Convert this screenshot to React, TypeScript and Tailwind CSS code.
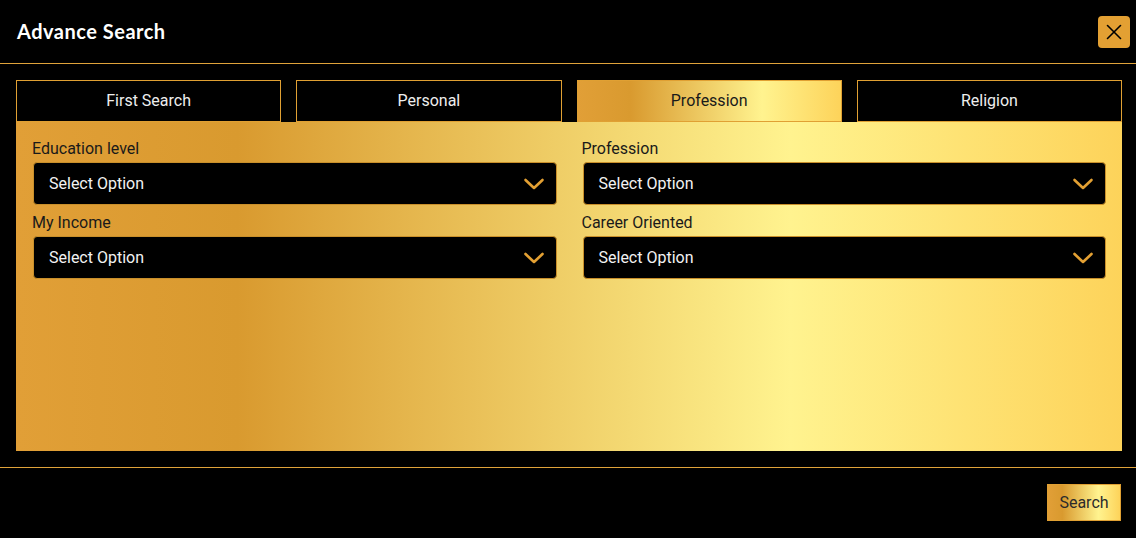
import { X } from "lucide-react";

const gold = "bg-[linear-gradient(90deg,#e19f37_0%,#d99a2f_20%,#fff38f_70%,#fdd35a_100%)]";

const tabs = ["First Search", "Personal", "Profession", "Religion"];

const fields = [
  { label: "Education level" },
  { label: "Profession" },
  { label: "My Income" },
  { label: "Career Oriented" },
];

function Chevron() {
  return (
    <svg width="22" height="14" viewBox="0 0 22 14" fill="none" className="shrink-0">
      <path d="M2.5 3 L11 11 L19.5 3" stroke="#e3a033" strokeWidth="2.6" strokeLinecap="round" strokeLinejoin="round" />
    </svg>
  );
}

export default function App() {
  return (
    <div
      className="w-[1136px] h-[538px] bg-black overflow-hidden text-white"
      style={{ fontFamily: "Roboto, 'Liberation Sans', sans-serif" }}
    >
      {/* Header */}
      <div className="h-[64px] flex items-center justify-between pl-[17px] pr-[6px] border-b border-[#e0a33a]">
        <h2
          className="text-[20px] font-bold tracking-[0.5px] -mt-[2px]"
          style={{ fontFamily: "Lato, 'Open Sans', sans-serif" }}
        >
          Advance Search
        </h2>
        <button className="w-[32px] h-[32px] rounded-[4px] bg-[#e3a033] flex items-center justify-center text-black">
          <X size={26} strokeWidth={1.5} />
        </button>
      </div>

      {/* Body */}
      <div className="pt-4 pl-4 pr-[14px] pb-4">
        <div className="grid grid-cols-4 gap-x-[15px]">
          {tabs.map((t) => {
            const active = t === "Profession";
            return (
              <div
                key={t}
                className={
                  active
                    ? `h-[42px] flex items-center justify-center text-[16px] text-[#1a1a1a] border border-[#e0a033] ${gold}`
                    : "h-[42px] flex items-center justify-center text-[16px] text-[#eeeeee] border border-[#e0a033] bg-black"
                }
              >
                {t}
              </div>
            );
          })}
        </div>

        <div className={`h-[329px] px-4 pt-[14px] ${gold}`}>
          <div className="grid grid-cols-2 gap-x-[25px] gap-y-[5px]">
            {fields.map((f) => (
              <div key={f.label} className="flex flex-col">
                <label className="text-[16px] leading-[24px] text-[#1a1a1a] mb-[1px] pt-[1px]">{f.label}</label>
                <div className="h-[43px] ml-[1px] rounded-[4px] bg-black border border-[#c98f2a] flex items-center justify-between pl-[15px] pr-[11px]">
                  <span className="text-[16px] text-[#f2f2f2]">Select Option</span>
                  <Chevron />
                </div>
              </div>
            ))}
          </div>
        </div>
      </div>

      {/* Footer */}
      <div className="border-t border-[#e0a33a] flex justify-end pt-4 pr-[15px]">
        <button
          className={`h-[37px] w-[74px] flex items-center justify-center text-[16px] text-[#2b2b2b] border border-[#e0a033] ${gold}`}
        >
          Search
        </button>
      </div>
    </div>
  );
}
